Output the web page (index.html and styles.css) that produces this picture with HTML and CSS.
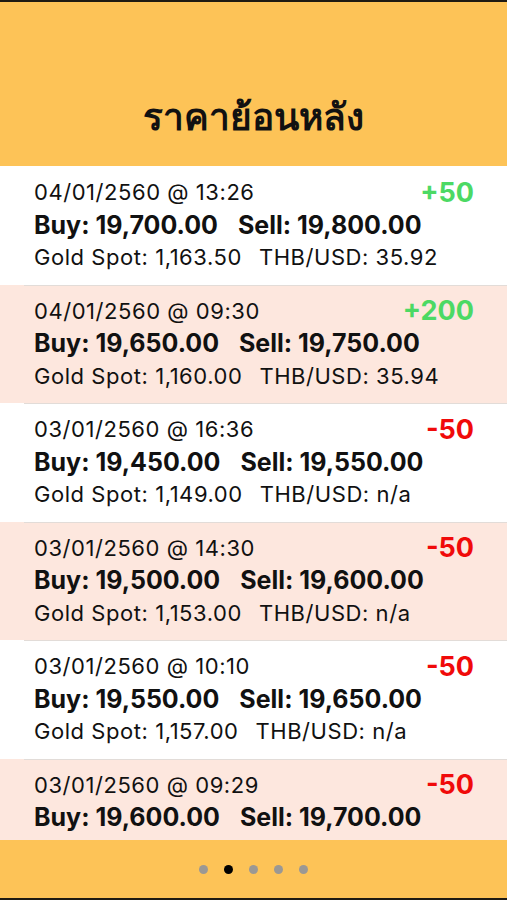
FILE: index.html
```html
<!DOCTYPE html>
<html lang="th">
<head>
  <meta charset="UTF-8">
  <title>ราคาย้อนหลัง</title>
  <meta name="viewport" content="width=device-width, initial-scale=1.0">
  <link rel="stylesheet" href="styles.css">
</head>
<body>
  <div class="screen">
    <header>
      <h1>ราคาย้อนหลัง</h1>
    </header>

    <div class="price-list">
      <div class="price-row">
        <div class="row-top">
          <span class="stamp">04/01/2560 @ 13:26</span>
          <span class="change up">+50</span>
        </div>
        <div class="row-prices"><span>Buy: 19,700.00</span><span>Sell: 19,800.00</span></div>
        <div class="row-spot"><span>Gold Spot: 1,163.50</span><span>THB/USD: 35.92</span></div>
      </div>

      <div class="price-row alt">
        <div class="row-top">
          <span class="stamp">04/01/2560 @ 09:30</span>
          <span class="change up">+200</span>
        </div>
        <div class="row-prices"><span>Buy: 19,650.00</span><span>Sell: 19,750.00</span></div>
        <div class="row-spot"><span>Gold Spot: 1,160.00</span><span>THB/USD: 35.94</span></div>
      </div>

      <div class="price-row">
        <div class="row-top">
          <span class="stamp">03/01/2560 @ 16:36</span>
          <span class="change down">-50</span>
        </div>
        <div class="row-prices"><span>Buy: 19,450.00</span><span>Sell: 19,550.00</span></div>
        <div class="row-spot"><span>Gold Spot: 1,149.00</span><span>THB/USD: n/a</span></div>
      </div>

      <div class="price-row alt">
        <div class="row-top">
          <span class="stamp">03/01/2560 @ 14:30</span>
          <span class="change down">-50</span>
        </div>
        <div class="row-prices"><span>Buy: 19,500.00</span><span>Sell: 19,600.00</span></div>
        <div class="row-spot"><span>Gold Spot: 1,153.00</span><span>THB/USD: n/a</span></div>
      </div>

      <div class="price-row">
        <div class="row-top">
          <span class="stamp">03/01/2560 @ 10:10</span>
          <span class="change down">-50</span>
        </div>
        <div class="row-prices"><span>Buy: 19,550.00</span><span>Sell: 19,650.00</span></div>
        <div class="row-spot"><span>Gold Spot: 1,157.00</span><span>THB/USD: n/a</span></div>
      </div>

      <!-- last row runs under the pager, only two lines show -->
      <div class="price-row alt">
        <div class="row-top">
          <span class="stamp">03/01/2560 @ 09:29</span>
          <span class="change down">-50</span>
        </div>
        <div class="row-prices"><span>Buy: 19,600.00</span><span>Sell: 19,700.00</span></div>
      </div>
    </div>

    <footer>
      <div class="pager">
        <span class="dot"></span>
        <span class="dot active"></span>
        <span class="dot"></span>
        <span class="dot"></span>
        <span class="dot"></span>
      </div>
    </footer>
  </div>
</body>
</html>
```

FILE: styles.css
```css
:root {
  --yellow: #fdc357;
  --pink: #fde7de;
  --line: #e2dcd8;
  --green: #4cd964;
  --red: #f00a0a;
}

body {
  margin: 0;
  font-family: Inter, "Liberation Sans", sans-serif;
  color: #111;
  background: #fff;
}

.screen {
  height: 900px;
  display: flex;
  flex-direction: column;
  border-top: 2px solid #1e1a12;
  border-bottom: 2px solid #1e1a12;
  box-sizing: border-box;
  overflow: hidden;
}

header {
  height: 164px;
  background: var(--yellow);
  display: flex;
  align-items: flex-end;
  justify-content: center;
  flex-shrink: 0;
}

h1 {
  margin: 0 0 20px;
  font-size: 37px;
  font-weight: bold;
  color: #111;
}

.price-list {
  flex: 1;
  overflow: hidden;
}

.price-row {
  height: 118.6px;
  box-sizing: border-box;
  padding: 10px 33px 0 34px;
  background: #fff;
  position: relative;
}

.price-row + .price-row::before {
  content: "";
  position: absolute;
  top: 0;
  left: 24px;
  right: 0;
  height: 1px;
  background: var(--line);
}

.price-row.alt {
  background: var(--pink);
}

.row-top {
  height: 32px;
  display: flex;
  justify-content: space-between;
  align-items: center;
}

.stamp {
  font-size: 22px;
  letter-spacing: 0.55px;
}

.change {
  font-size: 27px;
  font-weight: bold;
}

.change.up {
  color: var(--green);
}

.change.down {
  color: var(--red);
}

.row-prices {
  height: 33px;
  display: flex;
  align-items: center;
  gap: 20px;
  font-size: 25px;
  font-weight: bold;
}

.row-spot {
  height: 32px;
  display: flex;
  align-items: center;
  gap: 17px;
  font-size: 22px;
  letter-spacing: 0.55px;
}

footer {
  height: 58px;
  background: var(--yellow);
  display: flex;
  align-items: center;
  justify-content: center;
  flex-shrink: 0;
}

.pager {
  display: flex;
  gap: 16px;
}

.dot {
  width: 9px;
  height: 9px;
  border-radius: 50%;
  background: #9b9894;
}

.dot.active {
  background: #000;
}
```
